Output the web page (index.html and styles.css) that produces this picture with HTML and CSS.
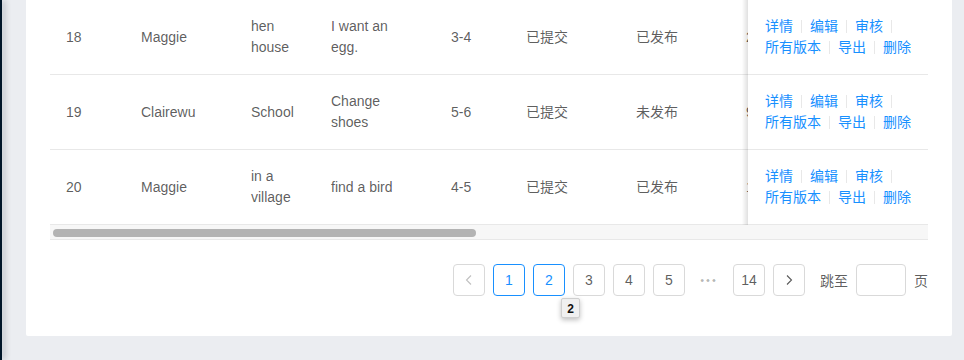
FILE: index.html
```html
<!DOCTYPE html>
<html lang="zh-CN">
<head>
  <meta charset="UTF-8">
  <meta name="viewport" content="width=device-width, initial-scale=1.0">
  <title>绘本列表</title>
  <link rel="stylesheet" href="styles.css">
</head>
<body>

<div class="layout">
  <aside class="sider"></aside>

  <main class="content">
    <div class="card">
      <div class="table-scroll">
        <table class="table">
          <colgroup>
            <col class="w-75"><col class="w-110"><col class="w-80"><col class="w-120"><col class="w-75">
            <col class="w-110"><col class="w-110"><col class="w-180"><col class="w-180">
          </colgroup>
          <tbody>
            <tr>
              <td>18</td>
              <td>Maggie</td>
              <td>hen house</td>
              <td class="col-title">I want an egg.</td>
              <td>3-4</td>
              <td>已提交</td>
              <td>已发布</td>
              <td>2</td>
              <td class="col-action">
                <a href="#">详情</a><i class="divider"></i><a href="#">编辑</a><i class="divider"></i><a href="#">审核</a><i class="divider"></i><a href="#">所有版本</a><i class="divider"></i><a href="#">导出</a><i class="divider"></i><a href="#">删除</a>
              </td>
            </tr>
            <tr>
              <td>19</td>
              <td>Clairewu</td>
              <td>School</td>
              <td class="col-title">Change shoes</td>
              <td>5-6</td>
              <td>已提交</td>
              <td>未发布</td>
              <td>9</td>
              <td class="col-action">
                <a href="#">详情</a><i class="divider"></i><a href="#">编辑</a><i class="divider"></i><a href="#">审核</a><i class="divider"></i><a href="#">所有版本</a><i class="divider"></i><a href="#">导出</a><i class="divider"></i><a href="#">删除</a>
              </td>
            </tr>
            <tr>
              <td>20</td>
              <td>Maggie</td>
              <td>in a village</td>
              <td class="col-title">find a bird</td>
              <td>4-5</td>
              <td>已提交</td>
              <td>已发布</td>
              <td>1</td>
              <td class="col-action">
                <a href="#">详情</a><i class="divider"></i><a href="#">编辑</a><i class="divider"></i><a href="#">审核</a><i class="divider"></i><a href="#">所有版本</a><i class="divider"></i><a href="#">导出</a><i class="divider"></i><a href="#">删除</a>
              </td>
            </tr>
          </tbody>
        </table>
      </div>
      <div class="scrollbar"><div class="scrollbar-thumb"></div></div>

      <ul class="pagination">
        <li class="page-item disabled">
          <svg width="12" height="12" viewBox="0 0 12 12"><path d="M8 1.5 3.5 6 8 10.5" fill="none" stroke="currentColor" stroke-width="1.1"/></svg>
        </li>
        <li class="page-item active">1</li>
        <li class="page-item hover">2<span class="tip">2</span></li>
        <li class="page-item">3</li>
        <li class="page-item">4</li>
        <li class="page-item">5</li>
        <li class="page-jump">•••</li>
        <li class="page-item">14</li>
        <li class="page-item">
          <svg width="12" height="12" viewBox="0 0 12 12"><path d="M4 1.5 8.5 6 4 10.5" fill="none" stroke="currentColor" stroke-width="1.1"/></svg>
        </li>
        <li class="quick-jumper">跳至<input type="text">页</li>
      </ul>
    </div>
  </main>
</div>

</body>
</html>
```

FILE: styles.css
```css
body {
  margin: 0;
  font-family: 'Liberation Sans', 'Noto Sans CJK SC', sans-serif;
  font-size: 14px;
  color: rgba(0, 0, 0, 0.65);
  background: #ebedf1;
}
.layout {
  display: flex;
  height: 360px;
  overflow: hidden;
}
.sider {
  width: 2px;
  flex: none;
  background: #001529;
  box-shadow: 2px 0 6px rgba(0, 21, 41, 0.45);
}
.content {
  flex: 1;
  min-width: 0;
  padding: 0 12px 24px 24px;
}
.card {
  background: #fff;
  padding: 0 24px 24px;
  border-radius: 0 0 2px 2px;
}

/* table */
.table-scroll {
  overflow: hidden;
}
.table {
  width: 1040px;
  table-layout: fixed;
  border-collapse: separate;
  border-spacing: 0;
}
.w-75 { width: 75px; }
.w-80 { width: 80px; }
.w-110 { width: 110px; }
.w-120 { width: 120px; }
.w-180 { width: 180px; }
.table td {
  padding: 16px;
  line-height: 21px;
  border-bottom: 1px solid #e8e8e8;
  vertical-align: middle;
  background: #fff;
}
.table td.col-title {
  padding-right: 24px;
}
.table td.col-action {
  position: sticky;
  right: 0;
  padding-left: 17px;
}
.table td.col-action::before {
  content: '';
  position: absolute;
  top: 0;
  bottom: -1px;
  left: -6px;
  width: 6px;
  background: linear-gradient(to right, rgba(0, 0, 0, 0), rgba(0, 0, 0, 0.12));
}
.col-action a {
  color: #1890ff;
  text-decoration: none;
  white-space: nowrap;
}
.divider {
  display: inline-block;
  width: 1px;
  height: 0.9em;
  margin: 0 8px;
  background: #e8e8e8;
  vertical-align: middle;
  position: relative;
  top: -1px;
}

/* horizontal scrollbar */
.scrollbar {
  height: 14px;
  background: #f7f7f7;
  border-bottom: 1px solid #e8e8e8;
  padding-top: 4px;
  box-sizing: content-box;
  height: 10px;
}
.scrollbar-thumb {
  width: 423px;
  height: 8px;
  margin-left: 3px;
  border-radius: 4px;
  background: #b3b3b3;
}

/* pagination */
.pagination {
  display: flex;
  justify-content: flex-end;
  align-items: center;
  gap: 8px;
  list-style: none;
  margin: 24px 0 16px;
  padding: 0;
}
.page-item {
  position: relative;
  box-sizing: border-box;
  min-width: 32px;
  height: 32px;
  border: 1px solid #d9d9d9;
  border-radius: 4px;
  background: #fff;
  color: rgba(0, 0, 0, 0.65);
  display: flex;
  align-items: center;
  justify-content: center;
}
.page-item.active,
.page-item.hover {
  border-color: #1890ff;
  color: #1890ff;
}
.page-item.disabled {
  color: rgba(0, 0, 0, 0.25);
}
.page-jump {
  width: 32px;
  text-align: center;
  font-size: 11px;
  letter-spacing: 2px;
  color: rgba(0, 0, 0, 0.3);
}
.quick-jumper {
  display: flex;
  align-items: center;
  margin-left: 7px;
}
.quick-jumper input {
  box-sizing: border-box;
  width: 50px;
  height: 32px;
  margin: 0 8px;
  border: 1px solid #d9d9d9;
  border-radius: 4px;
  outline: none;
}
.tip {
  position: absolute;
  left: 27px;
  top: 33px;
  width: 19px;
  height: 20px;
  line-height: 20px;
  box-sizing: border-box;
  background: #f0f0f0;
  border: 1px solid #cfcfcf;
  border-radius: 2px;
  box-shadow: 0 2px 5px rgba(0, 0, 0, 0.25);
  color: #111;
  font-size: 12px;
  font-weight: bold;
  text-align: center;
  z-index: 2;
}
```
